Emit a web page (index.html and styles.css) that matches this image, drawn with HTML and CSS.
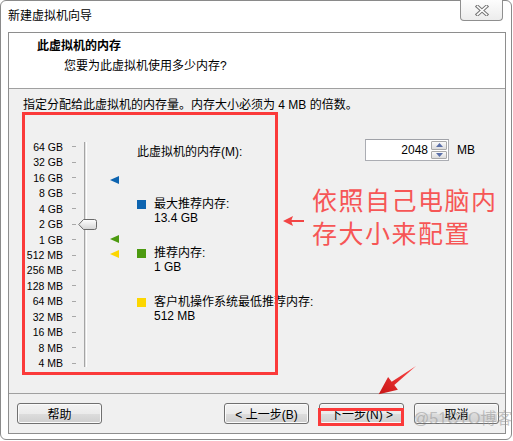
FILE: index.html
```html
<!DOCTYPE html>
<html lang="zh-CN">
<head>
<meta charset="utf-8">
<title>新建虚拟机向导</title>
<link rel="stylesheet" href="styles.css">
</head>
<body>
<div class="window">
  <div class="titlebar">
    <span class="title">新建虚拟机向导</span>
    <div class="close">
      <svg width="14" height="11" viewBox="0 0 14 11">
        <path d="M2.5 1.5 L11.5 9.5 M11.5 1.5 L2.5 9.5" stroke="#757575" stroke-width="3.6" stroke-linecap="square" fill="none"/>
        <path d="M2.5 1.5 L11.5 9.5 M11.5 1.5 L2.5 9.5" stroke="#ffffff" stroke-width="1.6" stroke-linecap="square" fill="none"/>
      </svg>
    </div>
  </div>
  <div class="client">
    <div class="header">
      <div class="h-title">此虚拟机的内存</div>
      <div class="h-sub">您要为此虚拟机使用多少内存?</div>
    </div>
    <div class="content">
      <p class="intro">指定分配给此虚拟机的内存量。内存大小必须为 4 MB 的倍数。</p>
      <div class="main">
        <div class="slider">
          <ul class="scale">
            <li><span class="lbl">64 GB</span><i class="tick"></i></li>
            <li><span class="lbl">32 GB</span><i class="tick"></i></li>
            <li><span class="lbl">16 GB</span><i class="tick"></i></li>
            <li><span class="lbl">8 GB</span><i class="tick"></i></li>
            <li><span class="lbl">4 GB</span><i class="tick"></i></li>
            <li><span class="lbl">2 GB</span><i class="tick"></i></li>
            <li><span class="lbl">1 GB</span><i class="tick"></i></li>
            <li><span class="lbl">512 MB</span><i class="tick"></i></li>
            <li><span class="lbl">256 MB</span><i class="tick"></i></li>
            <li><span class="lbl">128 MB</span><i class="tick"></i></li>
            <li><span class="lbl">64 MB</span><i class="tick"></i></li>
            <li><span class="lbl">32 MB</span><i class="tick"></i></li>
            <li><span class="lbl">16 MB</span><i class="tick"></i></li>
            <li><span class="lbl">8 MB</span><i class="tick"></i></li>
            <li><span class="lbl">4 MB</span><i class="tick"></i></li>
          </ul>
          <div class="track"></div>
          <svg class="thumb" width="19" height="11" viewBox="0 0 19 11" style="top:80px">
            <defs>
              <linearGradient id="tg" x1="0" y1="0" x2="0" y2="1">
                <stop offset="0" stop-color="#ffffff"/>
                <stop offset="1" stop-color="#d4d4d4"/>
              </linearGradient>
            </defs>
            <path d="M0.8 5.5 L5.5 0.5 H16.5 Q18.5 0.5 18.5 2.5 V8.5 Q18.5 10.5 16.5 10.5 H5.5 Z" fill="url(#tg)" stroke="#6a6a6a" stroke-width="1"/>
          </svg>
          <span class="marker m-blue" style="top:37px"></span>
          <span class="marker m-green" style="top:96px"></span>
          <span class="marker m-yellow" style="top:111px"></span>
        </div>
        <div class="info">
          <div class="mem-row">
            <span class="mem-label">此虚拟机的内存(M):</span>
            <div class="spin">
              <span class="spin-val">2048</span>
              <div class="spin-btns">
                <span class="sbtn"><svg width="7" height="4" viewBox="0 0 7 4"><path d="M0 4 L3.5 0 L7 4 Z" fill="#5a6fa8"/></svg></span>
                <span class="sbtn"><svg width="7" height="4" viewBox="0 0 7 4"><path d="M0 0 L3.5 4 L7 0 Z" fill="#5a6fa8"/></svg></span>
              </div>
            </div>
            <span class="unit">MB</span>
          </div>
          <div class="legend first">
            <span class="sq sq-blue"></span>
            <div class="legend-text">最大推荐内存:<br>13.4 GB</div>
          </div>
          <div class="legend">
            <span class="sq sq-green"></span>
            <div class="legend-text">推荐内存:<br>1 GB</div>
          </div>
          <div class="legend">
            <span class="sq sq-yellow"></span>
            <div class="legend-text">客户机操作系统最低推荐内存:<br>512 MB</div>
          </div>
        </div>
      </div>
    </div>
    <div class="footer">
      <button class="btn">帮助</button>
      <button class="btn back">&lt; 上一步(B)</button>
      <button class="btn">下一步(N) &gt;</button>
      <button class="btn">取消</button>
    </div>
  </div>
</div>

<div class="note-box"></div>
<div class="note-text">依照自己电脑内<br>存大小来配置</div>
<svg class="arrow-small" width="22" height="12" viewBox="0 0 22 12">
  <path d="M0 6 L10 1 L8.5 5 L21 5 L21 7 L8.5 7 L10 11 Z" fill="#f24545"/>
</svg>
<svg class="arrow-big" width="50" height="40" viewBox="0 0 50 40">
  <defs>
    <linearGradient id="ag" x1="1" y1="0" x2="0" y2="1">
      <stop offset="0" stop-color="#ff4a4a"/>
      <stop offset="1" stop-color="#c81414"/>
    </linearGradient>
  </defs>
  <path d="M46 6 L24.3 25.1 L27.9 29.8 L8.7 34.3 L18.1 17.1 L21.7 21.7 Z" fill="url(#ag)"/>
</svg>
<div class="next-box"></div>
<div class="watermark">@51CTO博客</div>
</body>
</html>
```
FILE: styles.css
```css
* { box-sizing: border-box; }

body {
  margin: 0;
  width: 513px;
  height: 441px;
  position: relative;
  background: #ffffff;
  font: 12px "Liberation Sans", "Noto Sans CJK SC", sans-serif;
  color: #000;
  overflow: hidden;
}

.window {
  width: 512px;
  height: 440px;
  border: 1px solid #8a8a8a;
  border-radius: 6px;
  background: #ffffff;
  display: flex;
  flex-direction: column;
}

.titlebar {
  height: 31px;
  display: flex;
  align-items: flex-start;
}

.title {
  padding: 7px 0 0 7px;
  line-height: 16px;
}

.close {
  margin: -1px 8px 0 auto;
  width: 43px;
  height: 21px;
  border: 1px solid #8f8f8f;
  border-top: none;
  border-radius: 0 0 4px 4px;
  background: linear-gradient(#fdfdfd, #ececec);
  display: flex;
  align-items: center;
  justify-content: center;
}

.client {
  margin-left: 7px;
  width: 498px;
  height: 402px;
  border: 1px solid #8e8e8e;
  background: #f0f0f0;
  display: flex;
  flex-direction: column;
}

.header {
  height: 56px;
  flex: none;
  background: #ffffff;
  border-bottom: 1px solid #a0a0a0;
  padding: 5px 0 0 28px;
}

.h-title {
  font-weight: bold;
  line-height: 16px;
}

.h-sub {
  margin: 4px 0 0 27px;
  line-height: 16px;
}

.content {
  flex: 1;
  padding: 8px 0 0 14px;
}

.intro {
  margin: 0;
  line-height: 16px;
}

.main {
  display: flex;
  margin-top: 26px;
}

.slider {
  position: relative;
  width: 114px;
  flex: none;
  display: flex;
  align-items: flex-start;
}

.scale {
  list-style: none;
  margin: 0;
  padding: 0;
}

.scale li {
  height: 15.47px;
  display: flex;
  align-items: center;
}

.lbl {
  width: 40px;
  text-align: right;
  font-size: 10.5px;
  line-height: 12px;
  white-space: nowrap;
}

.tick {
  width: 4px;
  height: 1px;
  margin-left: 9px;
  background: #a8a8a8;
}

.track {
  margin: 3px 0 0 8px;
  width: 3px;
  height: 225px;
  border-left: 1px solid #a4a4a4;
  border-right: 1px solid #ffffff;
  background: #e2e2e2;
}

.thumb {
  position: absolute;
  left: 55px;
}

.marker {
  position: absolute;
  left: 87px;
  width: 0;
  height: 0;
  border-top: 4px solid transparent;
  border-bottom: 4px solid transparent;
  border-right: 9px solid;
}

.m-blue { border-right-color: #0d64b0; }
.m-green { border-right-color: #4c9a10; }
.m-yellow { border-right-color: #fcd600; }

.info {
  flex: 1;
}

.mem-row {
  display: flex;
  align-items: center;
  height: 22px;
}

.mem-label {
  width: 228px;
}

.spin {
  display: flex;
  width: 84px;
  height: 22px;
  border: 1px solid #abadb3;
  border-top-color: #a0a2a8;
  background: #ffffff;
}

.spin-val {
  flex: 1;
  text-align: right;
  padding-right: 3px;
  line-height: 20px;
}

.spin-btns {
  width: 17px;
  display: flex;
  flex-direction: column;
  gap: 1px;
  padding: 1px 1px 1px 0;
}

.sbtn {
  flex: 1;
  border: 1px solid #a9a9a9;
  border-radius: 1px;
  background: linear-gradient(#fafafa, #dcdcdc);
  display: flex;
  align-items: center;
  justify-content: center;
}

.unit {
  margin-left: 8px;
}

.legend {
  display: flex;
  margin-top: 21px;
}

.legend.first {
  margin-top: 36px;
}

.sq {
  width: 9px;
  height: 9px;
  margin-top: 3px;
  flex: none;
}

.sq-blue { background: #0d64b0; }
.sq-green { background: #4c9a10; }
.sq-yellow { background: #fcd600; }

.legend-text {
  margin-left: 8px;
  line-height: 14px;
  white-space: nowrap;
}

.footer {
  height: 40px;
  flex: none;
  border-top: 1px solid #a0a0a0;
  display: flex;
  align-items: flex-start;
  gap: 10px;
  padding: 9px 6px 0 8px;
}

.btn {
  width: 85px;
  height: 21px;
  padding: 0;
  border: 1px solid #707070;
  border-radius: 3px;
  background: linear-gradient(#f3f3f3 0%, #ebebeb 50%, #dddddd 51%, #cfcfcf 100%);
  box-shadow: inset 0 0 0 1px #fbfbfb;
  font: inherit;
  color: #000;
}

.back {
  margin-left: auto;
}

/* annotations drawn over the screenshot */
.note-box {
  position: absolute;
  left: 22px;
  top: 112px;
  width: 256px;
  height: 263px;
  border: 3px solid #fb3a3a;
}

.note-text {
  position: absolute;
  left: 312px;
  top: 183px;
  font-family: "Noto Sans CJK SC", sans-serif;
  font-size: 25px;
  line-height: 33px;
  letter-spacing: 1.5px;
  color: #f65656;
}

.arrow-small {
  position: absolute;
  left: 283px;
  top: 215px;
}

.arrow-big {
  position: absolute;
  left: 370px;
  top: 360px;
}

.next-box {
  position: absolute;
  left: 318px;
  top: 408px;
  width: 86px;
  height: 18px;
  border: 3px solid #fb3a3a;
}

.watermark {
  position: absolute;
  left: 413px;
  top: 409px;
  font-size: 16px;
  line-height: 20px;
  color: rgba(150, 150, 150, 0.55);
  white-space: nowrap;
}
```
